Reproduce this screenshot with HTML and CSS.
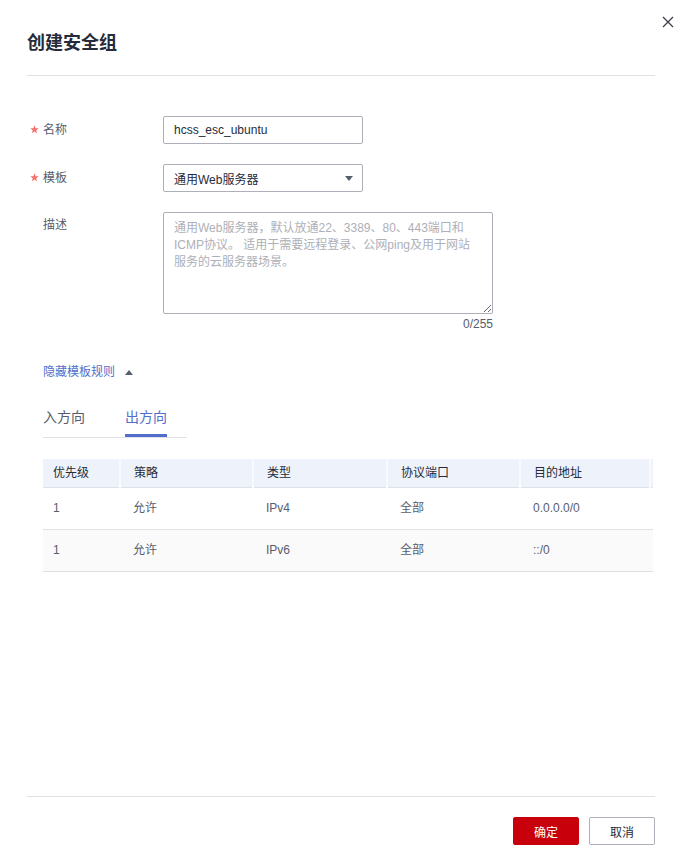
FILE: index.html
```html
<!DOCTYPE html>
<html lang="zh-CN">
<head>
<meta charset="utf-8">
<title>创建安全组</title>
<link rel="stylesheet" href="styles.css">
</head>
<body>
<div class="dialog">
  <div class="main">
    <div class="header">
      <h1 class="title">创建安全组</h1>
      <button class="close" aria-label="关闭">
        <svg width="12" height="12" viewBox="0 0 12 12"><path d="M1 1L11 11M11 1L1 11" stroke="#3a3f4b" stroke-width="1.3" fill="none"/></svg>
      </button>
    </div>

    <div class="form">
      <div class="row">
        <div class="label"><span class="star"><svg width="9" height="9" viewBox="0 0 10 10"><path d="M5 0.3L6.2 3.6L9.7 3.7L6.9 5.8L7.9 9.2L5 7.2L2.1 9.2L3.1 5.8L0.3 3.7L3.8 3.6Z" fill="#f66f6a"/></svg></span>名称</div>
        <div class="input">hcss_esc_ubuntu</div>
      </div>
      <div class="row">
        <div class="label"><span class="star"><svg width="9" height="9" viewBox="0 0 10 10"><path d="M5 0.3L6.2 3.6L9.7 3.7L6.9 5.8L7.9 9.2L5 7.2L2.1 9.2L3.1 5.8L0.3 3.7L3.8 3.6Z" fill="#f66f6a"/></svg></span>模板</div>
        <div class="input select">
          <span>通用Web服务器</span>
          <svg class="caret" width="8" height="5" viewBox="0 0 8 5"><path d="M0 0H8L4 5Z" fill="#575d6c"/></svg>
        </div>
      </div>
      <div class="row top">
        <div class="label desc">描述</div>
        <div class="area-wrap">
          <textarea class="area" placeholder="通用Web服务器，默认放通22、3389、80、443端口和&#10;ICMP协议。 适用于需要远程登录、公网ping及用于网站&#10;服务的云服务器场景。"></textarea>
          <div class="counter">0/255</div>
        </div>
      </div>

      <div class="toggle">
        <span class="link">隐藏模板规则</span>
        <svg width="8" height="5" viewBox="0 0 8 5"><path d="M0 5H8L4 0Z" fill="#575d6c"/></svg>
      </div>

      <div class="tabs">
        <div class="tab">入方向</div>
        <div class="tab active">出方向</div>
      </div>

      <table class="rules">
        <thead>
          <tr><th class="c1">优先级</th><th class="c2">策略</th><th class="c3">类型</th><th class="c4">协议端口</th><th class="c5">目的地址</th><th class="c6"></th></tr>
        </thead>
        <tbody>
          <tr><td>1</td><td>允许</td><td>IPv4</td><td>全部</td><td>0.0.0.0/0</td><td></td></tr>
          <tr class="alt"><td>1</td><td>允许</td><td>IPv6</td><td>全部</td><td>::/0</td><td></td></tr>
        </tbody>
      </table>
    </div>
  </div>

  <div class="footer">
    <button class="btn primary">确定</button>
    <button class="btn">取消</button>
  </div>
</div>
</body>
</html>
```

FILE: styles.css
```css
* { box-sizing: border-box; }
html, body { margin: 0; padding: 0; background: #fff; }
body {
  font-family: "Liberation Sans", "Noto Sans CJK SC", sans-serif;
  font-size: 12px;
  color: #575d6c;
}
.dialog {
  height: 854px;
  display: flex;
  flex-direction: column;
  padding: 0 30px 0 27px;
}
.main { flex: 1; }
.header {
  position: relative;
  height: 76px;
  border-bottom: 1px solid #dfe1e6;
  padding-top: 28px;
}
.title {
  margin: 0;
  font-size: 18px;
  line-height: 26px;
  font-weight: bold;
  color: #252b3a;
  font-family: "Noto Sans CJK SC", sans-serif;
}
.close {
  position: absolute;
  right: -20px;
  top: 15px;
  width: 14px;
  height: 14px;
  padding: 1px;
  border: 0;
  background: none;
  display: flex;
  align-items: center;
  justify-content: center;
}
.form { padding: 40px 0 0 16px; }
.row {
  display: flex;
  align-items: center;
  margin-bottom: 20px;
}
.row.top { align-items: flex-start; margin-bottom: 0; }
.label {
  width: 120px;
  position: relative;
  line-height: 18px;
  color: #575d6c;
}
.label.desc { padding-top: 4px; }
.star {
  position: absolute;
  left: -13px;
  top: 4px;
  display: flex;
}
.input {
  width: 200px;
  height: 28px;
  border: 1px solid #adb0b8;
  border-radius: 2px;
  padding: 0 10px;
  display: flex;
  align-items: center;
  color: #252b3a;
}
.select { justify-content: space-between; padding-right: 9px; }
.caret { display: block; }
.area-wrap { width: 330px; }
.area {
  display: block;
  width: 330px;
  height: 102px;
  border: 1px solid #adb0b8;
  border-radius: 2px;
  padding: 7px 10px;
  font-family: "Liberation Sans", "Noto Sans CJK SC", sans-serif;
  font-size: 12px;
  line-height: 17px;
  color: #252b3a;
  resize: vertical;
  outline: none;
}
.area::placeholder { color: #adb0b8; }
.counter {
  text-align: right;
  line-height: 20px;
  color: #575d6c;
}
.toggle {
  margin-top: 28px;
  display: flex;
  align-items: center;
  gap: 10px;
  line-height: 20px;
}
.link { color: #526ecc; }
.tabs {
  margin-top: 25px;
  display: inline-flex;
  gap: 40px;
  padding-right: 20px;
  border-bottom: 1px solid #dfe1e6;
}
.tab {
  font-size: 14px;
  line-height: 20px;
  height: 30px;
  padding-bottom: 6px;
  border-bottom: 3px solid transparent;
  color: #575d6c;
}
.tab.active {
  color: #526ecc;
  border-bottom-color: #526ecc;
}
.rules {
  margin-top: 21px;
  width: 610px;
  border-collapse: collapse;
  table-layout: fixed;
}
.rules th {
  height: 28px;
  line-height: 16px;
  background: #eef3fb;
  text-align: left;
  font-weight: normal;
  color: #252b3a;
  padding: 0 10px 0 13px;
  border-left: 2px solid #f8fafe;
  border-bottom: 1px solid #dfe1e6;
}
.rules th:first-child { border-left: 0; padding-left: 10px; }
.rules td {
  height: 42px;
  line-height: 16px;
  padding: 0 10px 0 13px;
  border-bottom: 1px solid #dfe1e6;
  color: #575d6c;
}
.rules td:first-child { padding-left: 10px; }
.rules tr.alt td { background: #fafafa; }
.c1 { width: 77px; }
.c2 { width: 133px; }
.c3 { width: 134px; }
.c4 { width: 133px; }
.c5 { width: 130px; }
.c6 { width: 3px; padding: 0 !important; }
.footer {
  height: 58px;
  border-top: 1px solid #dfe1e6;
  display: flex;
  justify-content: flex-end;
  align-items: flex-start;
  gap: 10px;
  padding-top: 20px;
}
.btn {
  width: 66px;
  height: 28px;
  border: 1px solid #adb0b8;
  border-radius: 2px;
  background: #fff;
  color: #252b3a;
  font-family: "Liberation Sans", "Noto Sans CJK SC", sans-serif;
  font-size: 12px;
  padding: 0;
}
.btn.primary {
  background: #c7000b;
  border-color: #c7000b;
  color: #fff;
}
```
